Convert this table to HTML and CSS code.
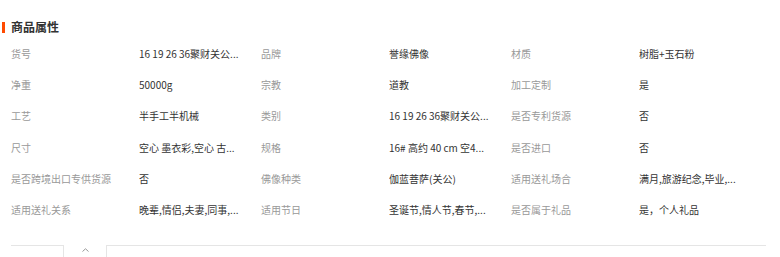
FILE: index.html
```html
<!DOCTYPE html>
<html lang="zh-CN">
<head>
<meta charset="utf-8">
<link rel="stylesheet" href="styles.css">
</head>
<body>
<div class="attrs">
  <div class="title"><span class="bar"></span><span class="title-text">商品属性</span></div>
  <div class="grid">
    <div class="k">货号</div><div class="v">16 19 26 36聚财关公...</div>
    <div class="k">品牌</div><div class="v">誉缘佛像</div>
    <div class="k">材质</div><div class="v">树脂+玉石粉</div>

    <div class="k">净重</div><div class="v">50000g</div>
    <div class="k">宗教</div><div class="v">道教</div>
    <div class="k">加工定制</div><div class="v">是</div>

    <div class="k">工艺</div><div class="v">半手工半机械</div>
    <div class="k">类别</div><div class="v">16 19 26 36聚财关公...</div>
    <div class="k">是否专利货源</div><div class="v">否</div>

    <div class="k">尺寸</div><div class="v">空心 墨衣彩,空心 古...</div>
    <div class="k">规格</div><div class="v">16# 高约 40 cm 空4...</div>
    <div class="k">是否进口</div><div class="v">否</div>

    <div class="k">是否跨境出口专供货源</div><div class="v">否</div>
    <div class="k">佛像种类</div><div class="v">伽蓝菩萨(关公)</div>
    <div class="k">适用送礼场合</div><div class="v">满月,旅游纪念,毕业,...</div>

    <div class="k">适用送礼关系</div><div class="v">晚辈,情侣,夫妻,同事,...</div>
    <div class="k">适用节日</div><div class="v">圣诞节,情人节,春节,...</div>
    <div class="k">是否属于礼品</div><div class="v">是，个人礼品</div>
  </div>
  <div class="fold">
    <div class="seg seg-left"></div>
    <div class="tab">
      <svg class="chev" width="7" height="4" viewBox="0 0 7 4"><path d="M0.5 3.5 L3.5 0.8 L6.5 3.5" fill="none" stroke="#999" stroke-width="1"/></svg>
    </div>
    <div class="seg seg-right"></div>
  </div>
</div>
</body>
</html>
```

FILE: styles.css
```css
html, body {
  margin: 0;
  padding: 0;
  background: #fff;
}
body {
  font-family: "Noto Sans CJK SC", "Noto Sans", sans-serif;
  width: 780px;
  height: 257px;
  overflow: hidden;
}
.attrs {
  padding-top: 19px;
}
.title {
  display: flex;
  align-items: center;
  height: 16px;
  padding-left: 2px;
}
.bar {
  width: 3px;
  height: 11px;
  background: #ff4a00;
}
.title-text {
  margin-left: 6px;
  font-size: 12px;
  font-weight: bold;
  color: #333;
  line-height: 16px;
}
.grid {
  display: grid;
  grid-template-columns: repeat(3, 128px 122px);
  grid-auto-rows: 31.2px;
  padding-left: 11px;
  margin-top: 3px;
  font-size: 10px;
  line-height: 31.2px;
  white-space: nowrap;
}
.k {
  color: #999;
}
.v {
  color: #333;
  overflow: hidden;
}
.fold {
  display: flex;
  margin-top: 20px;
  padding-left: 11px;
  height: 20px;
}
.seg {
  border-top: 1px solid #e5e5e5;
}
.seg-left {
  width: 52px;
}
.seg-right {
  width: 659px;
}
.tab {
  border-left: 1px solid #e5e5e5;
  border-right: 1px solid #e5e5e5;
  display: flex;
  justify-content: center;
  align-items: flex-start;
  padding-top: 2px;
  box-sizing: border-box;
  width: 44px;
}
.chev {
  display: block;
  margin-top: 1px;
}
```
